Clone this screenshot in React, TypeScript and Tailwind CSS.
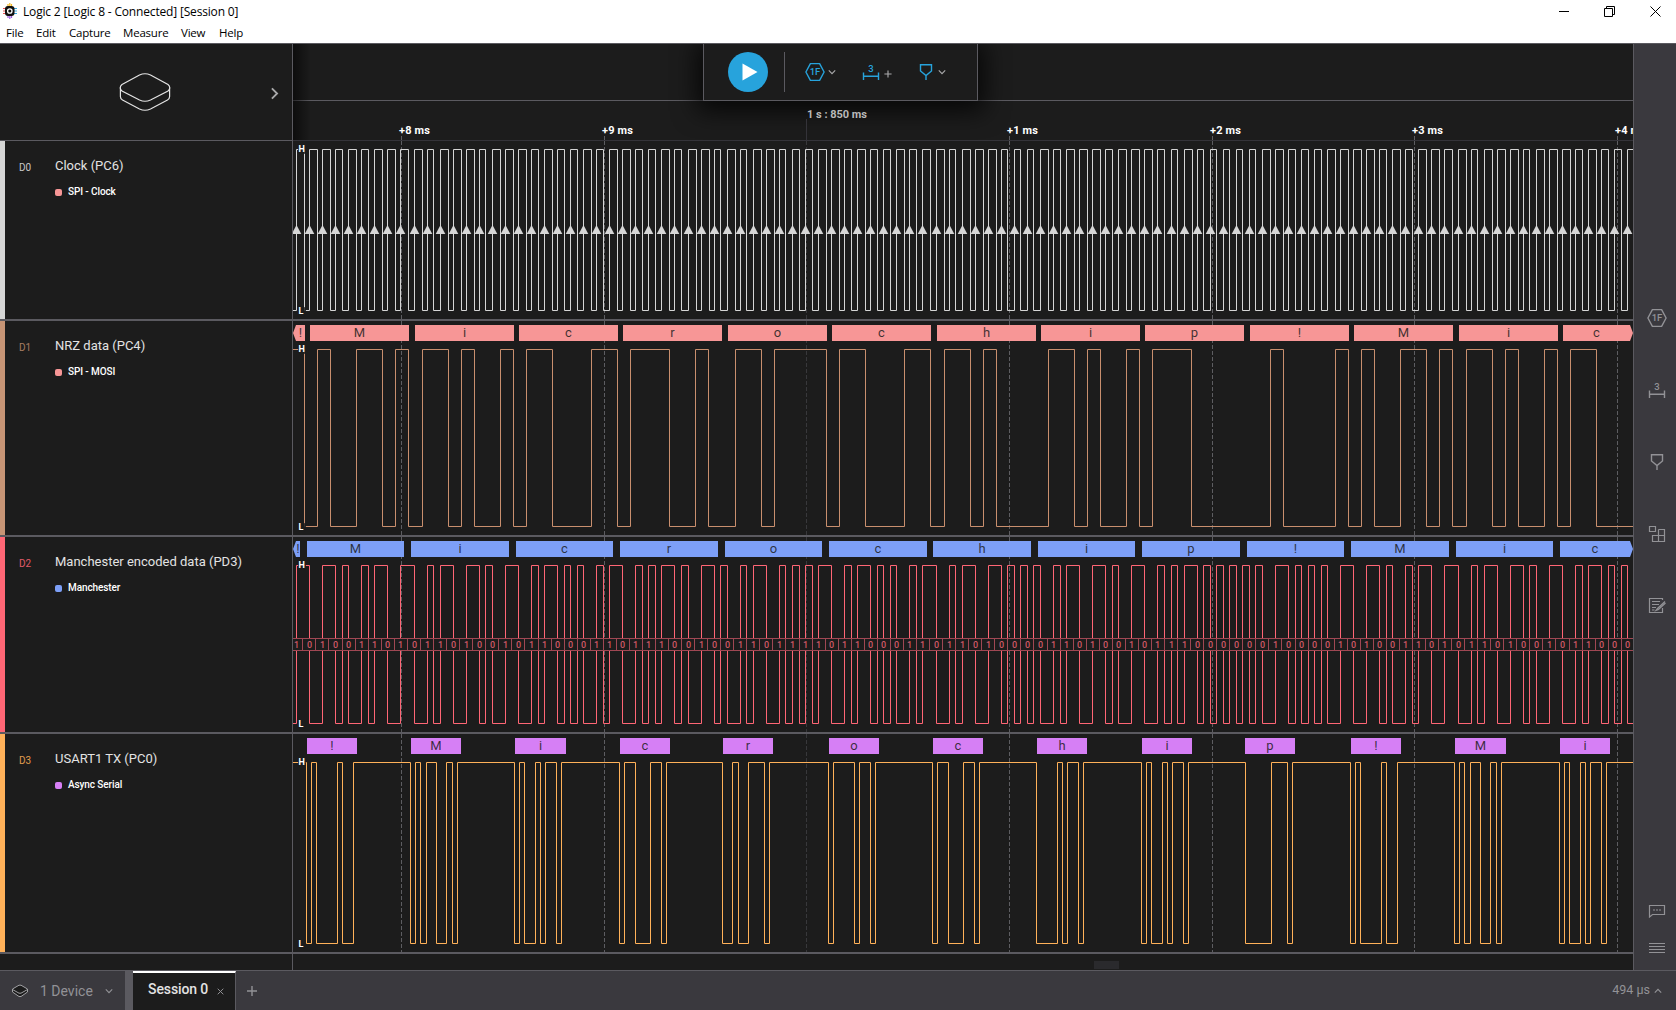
import React from "react";

const LEFT = 293;
const WIDTH = 1340;
const MESSAGE = "Microchip!Mic";

const bitCentres: number[] = (() => {
  const jumps = [414, 688, 936, 1171, 1458];
  const out: number[] = [];
  let x = 296;
  while (x < 1640) {
    out.push(x);
    x += 13;
    if (jumps.includes(x + 1)) x += 1;
  }
  return out;
})();

const bits: number[] = [1];
for (const ch of MESSAGE) {
  const code = ch.charCodeAt(0);
  for (let b = 7; b >= 0; b--) bits.push((code >> b) & 1);
}

const halfBit = (i: number) => {
  const x = bitCentres[i];
  const starts = [270, 414, 688, 936, 1171, 1458, 1710];
  const s = starts.filter((v) => v <= x).length - 1;
  return x + ((x - starts[s]) / (starts[s + 1] - starts[s]) < 0.4 ? 6 : 7);
};

const dataFall = (i: number) => {
  const x = bitCentres[i];
  const early = (x >= 688 && x <= 714) || (x >= 1171 && x <= 1236);
  return x + (early ? 7 : 8);
};

const clockFall = (i: number) => (bits[i] === bits[i + 1] ? halfBit(i) : bitCentres[i] + 8);

function trace(edges: [number, number][], start: number, high: number, low: number) {
  let level = start;
  let d = `M293 ${(level ? high : low) + 0.5}`;
  for (const [x, v] of edges) {
    if (x > 1633) break;
    if (v === level) continue;
    level = v;
    d += `H${x + 0.5}V${(v ? high : low) + 0.5}`;
  }
  return d + "H1634";
}

const clockEdges: [number, number][] = bitCentres.flatMap((x, i) => [
  [x, 1] as [number, number],
  [clockFall(i), 0] as [number, number],
]);

const nrzEdges: [number, number][] = bits.slice(1, bitCentres.length).map((b, i) => [dataFall(i), b]);

const manchesterEdges: [number, number][] = bitCentres.flatMap((x, i) => [
  [x, bits[i]] as [number, number],
  [halfBit(i), 1 - bits[i + 1]] as [number, number],
]);

const frames: [string, number, number][] = [
  ["!", 307, 50], ["M", 411, 50], ["i", 515, 51], ["c", 620, 50], ["r", 723, 50], ["o", 829, 50], ["c", 933, 50],
  ["h", 1037, 50], ["i", 1142, 50], ["p", 1245, 50], ["!", 1351, 50], ["M", 1455, 51], ["i", 1560, 50],
];

const serialEdges: [number, number][] = frames.flatMap(([ch, x]) => {
  const code = ch.charCodeAt(0);
  const start = ch === "p" ? x : x - 1;
  const out: [number, number][] = [[start, 0]];
  for (let b = 0; b < 8; b++) out.push([start + Math.round(5.2 * (b + 1)), (code >> b) & 1]);
  out.push([start + 47, 1]);
  return out;
});

const spiBubbles: [string, number, number][] = [...MESSAGE].map((c, n) => [
  c,
  bitCentres[1 + n * 8] + 1,
  n === 12 ? 1633 : dataFall(8 + n * 8) + 1,
]);

const manStarts = [307, 411, 516, 620, 725, 829, 933, 1038, 1142, 1247, 1351, 1456, 1560];
const manEnds = [404, 509, 613, 718, 822, 927, 1031, 1135, 1240, 1344, 1449, 1553, 1633];
const manBubbles: [string, number, number][] = [...MESSAGE].map((c, n) => [c, manStarts[n], manEnds[n]]);

const gridLines = [401, 604, 806, 1009, 1212, 1414, 1617];

function Grid({ top, height }: { top: number; height: number }) {
  return (
    <g>
      {gridLines.map((x) => (
        <line key={x} x1={x + 0.5} x2={x + 0.5} y1={top} y2={top + height} stroke={x === 806 ? "#38383b" : "#5d5d61"} strokeDasharray="4 2" />
      ))}
    </g>
  );
}

function Level({ y, text }: { y: number; text: string }) {
  return (
    <g>
      <rect x={298} y={y - 4} width={8} height={9} rx={2} fill="#1c1c1c" opacity={0.85} />
      <text x={298.5} y={y + 3.2} fontSize={9} fontWeight={700} fill="#fff">{text}</text>
    </g>
  );
}

function Bubbles({ items, y, color, lead, leadEnd }: { items: [string, number, number][]; y: number; color: string; lead?: boolean; leadEnd?: number }) {
  return (
    <g fontSize={13} textAnchor="middle">
      {lead && (
        <>
          <path d={`M293 ${y + 8}L296 ${y}H${leadEnd}V${y + 16}H296Z`} fill={color} />
          <text x={(293 + leadEnd! + 3) / 2} y={y + 12} fill="#1c1c1c" fillOpacity={0.85}>!</text>
        </>
      )}
      {items.map(([c, a, b], i) => (
        <g key={i}>
          {b === 1633 ? (
            <path d={`M${a} ${y}H1630L1633 ${y + 8}L1630 ${y + 16}H${a}Z`} fill={color} />
          ) : (
            <rect x={a} y={y} width={b - a} height={16} fill={color} />
          )}
          <text x={(a + b) / 2 - (b === 1633 ? 1.5 : 0)} y={y + 12} fill="#1c1c1c" fillOpacity={0.85}>{c}</text>
        </g>
      ))}
    </g>
  );
}

function ChannelRow(props: {
  id: string; title: string; analyzer: string; color: string; idColor: string; tag: string;
  top: number; height: number; rowClass: string; children: React.ReactNode;
}) {
  const { id, title, analyzer, color, idColor, tag, top, height, rowClass, children } = props;
  return (
    <div className={`flex shrink-0 border-b-2 border-[#5b5a60] ${rowClass}`}>
      <div className="flex w-[293px] shrink-0 border-r border-[#5b5a60]">
        <div className="w-[5px] shrink-0" style={{ background: color }} />
        <div className="w-[50px] shrink-0 pt-[19px] pl-[14px] text-[10px] leading-[16px]" style={{ color: idColor }}>{id}</div>
        <div className="pt-[16px]">
          <div className="text-[13px] leading-[18px] text-[#e3e3e3]">{title}</div>
          <div className="mt-[10px] flex items-center gap-[6px]">
            <span className="size-[7px] rounded-[2px]" style={{ background: tag }} />
            <span className="text-[10px] leading-[14px] font-medium tracking-[-0.1px] text-white">{analyzer}</span>
          </div>
        </div>
      </div>
      <svg width={WIDTH} height={height} viewBox={`${LEFT} ${top} ${WIDTH} ${height}`} className="block shrink-0" fill="none">
        <Grid top={top} height={height} />
        {children}
      </svg>
    </div>
  );
}

function HexIcon({ className }: { className: string }) {
  return (
    <svg width="20" height="20" viewBox="0 0 20 20" fill="none" className={className}>
      <path d="M5.4 1.6H14.6L19.1 10L14.6 18.4H5.4L0.9 10Z" stroke="currentColor" strokeWidth="1.4" strokeLinejoin="round" />
      <text x="10" y="13.4" fontSize="9.5" fontWeight="500" textAnchor="middle" fill="currentColor">1F</text>
    </svg>
  );
}

function RangeIcon({ className }: { className: string }) {
  return (
    <svg width="18" height="18" viewBox="0 0 18 18" fill="none" className={className}>
      <path d="M1.5 9.5V17M16.5 9.5V17M1.5 13.3H16.5" stroke="currentColor" strokeWidth="1.4" />
      <text x="9" y="8.5" fontSize="9.5" fontWeight="500" textAnchor="middle" fill="currentColor">3</text>
    </svg>
  );
}

function MarkerIcon({ className }: { className: string }) {
  return (
    <svg width="14" height="18" viewBox="0 0 14 18" fill="none" className={className}>
      <path d="M1.5 1.7H12.5V8L7 12.6L1.5 8ZM7 12.6V17" stroke="currentColor" strokeWidth="1.4" />
    </svg>
  );
}

function Chevron({ d, size, className }: { d: string; size: number; className: string }) {
  return (
    <svg width={size} height={size} viewBox="0 0 10 10" fill="none" className={className}>
      <path d={d} stroke="currentColor" strokeWidth="1.4" />
    </svg>
  );
}

function TitleBar() {
  return (
    <div className="h-[43px] shrink-0 bg-white font-['Open_Sans','Noto_Sans',sans-serif] text-black">
      <div className="flex h-[22px] items-center">
        <svg width="16" height="16" viewBox="0 0 16 16" className="ml-[2px]">
          <g strokeWidth="1.2">
            <path d="M6 1V4M9.5 1V4M7.8 0V3" stroke="#f5b921" />
            <path d="M1 5.5H4M1 8H4M1 10.5H4" stroke="#ee4f4f" />
            <path d="M12 5.5H15M12 8H15M12 10.5H15" stroke="#36a9e0" />
            <path d="M6 12V15M9.5 12V15M7.8 12V16" stroke="#9a5be0" />
          </g>
          <rect x="3" y="3" width="9.5" height="10" rx="3" fill="#111" />
          <circle cx="7.8" cy="8" r="2.2" fill="none" stroke="#fff" strokeWidth="1.3" />
        </svg>
        <span className="mt-px ml-[5px] text-[12px] tracking-[-0.17px] whitespace-nowrap">Logic 2 [Logic 8 - Connected] [Session 0]</span>
        <div className="ml-auto flex items-center">
          <svg width="11" height="11" viewBox="0 0 11 11" className="mr-[34px]"><path d="M0 5.5H10" stroke="#000" /></svg>
          <svg width="11" height="11" viewBox="0 0 11 11" fill="none" className="mr-[35px]">
            <path d="M0.5 2.5H8.5V10.5H0.5ZM2.5 2.5V0.5H10.5V8.5H8.5" stroke="#000" />
          </svg>
          <svg width="11" height="11" viewBox="0 0 11 11" className="mr-[15px]"><path d="M0.5 0.5L10.5 10.5M10.5 0.5L0.5 10.5" stroke="#000" /></svg>
        </div>
      </div>
      <div className="flex h-[21px] items-center pl-[6px] text-[11.5px] tracking-[-0.2px]">
        <span className="w-[30px]">File</span>
        <span className="w-[33px]">Edit</span>
        <span className="w-[54px]">Capture</span>
        <span className="w-[58px]">Measure</span>
        <span className="w-[38px]">View</span>
        <span>Help</span>
      </div>
    </div>
  );
}

function Header() {
  return (
    <div className="flex h-[98px] shrink-0 border-t border-[#5b5a60]">
      <div className="flex w-[293px] shrink-0 items-center border-r border-b border-[#5b5a60]">
        <svg width="52" height="40" viewBox="0 0 52 40" fill="none" className="ml-[119px]" stroke="#e3e3e3" strokeWidth="1.2">
          <path d="M3 12.5L20.5 3Q26 0.5 31.5 3L49 12.5Q52.5 15.5 49 19L31.5 28Q26 30.5 20.5 28L3 19Q-0.5 15.5 3 12.5Z" />
          <path d="M1.4 15.5V24.5Q1.4 27 3.5 28L20.5 37Q26 39.5 31.5 37L48.5 28Q50.6 27 50.6 24.5V15.5" />
        </svg>
        <Chevron d="M3 1L7 5L3 9" size={13} className="mt-[2px] ml-[97px] text-[#a9a9ab]" />
      </div>
      <div className="relative flex w-[1340px] shrink-0 flex-col overflow-hidden border-b border-[#343339]">
        <div className="flex h-[57px] shrink-0 border-b border-[#5b5a60] pl-[410px]">
          <div className="relative flex h-[57px] w-[275px] items-center border border-t-0 border-[#5b5a60] bg-[#1c1c1c] shadow-[0_4px_24px_6px_rgba(0,0,0,0.75)]">
            <div className="ml-[24px] flex size-[40px] shrink-0 items-center justify-center rounded-full bg-[#27a3dc]">
              <svg width="16" height="18" viewBox="0 0 16 18" className="ml-[3px]"><path d="M0.5 0.5L15.5 9L0.5 17.5Z" fill="#fff" /></svg>
            </div>
            <div className="ml-[16px] h-[40px] w-px shrink-0 bg-[#5b5a60]" />
            <HexIcon className="ml-[20px] shrink-0 text-[#27a3dc]" />
            <Chevron d="M1 3L5 7L9 3" size={8} className="ml-[3px] shrink-0 text-[#a9a9ab]" />
            <RangeIcon className="ml-[26px] shrink-0 text-[#27a3dc]" />
            <Chevron d="M5 0.5V9.5M0.5 5H9.5" size={8} className="mt-[3px] ml-[4px] shrink-0 text-[#a9a9ab]" />
            <MarkerIcon className="ml-[27px] shrink-0 text-[#27a3dc]" />
            <Chevron d="M1 3L5 7L9 3" size={8} className="ml-[5px] shrink-0 text-[#a9a9ab]" />
          </div>
        </div>
        <svg width="1340" height="39" viewBox="293 101 1340 39" className="relative block shrink-0" fontSize="11" fontWeight="700">
          <path d="M806.5 119V140" stroke="#343339" />
          {gridLines.filter((x) => x !== 806).map((x) => (
            <path key={x} d={`M${x + 0.5} 136V140`} stroke="#5d5d61" />
          ))}
          <text x="807" y="117.5" fill="#b9b9b9" textLength="60">1 s : 850 ms</text>
          {["+8 ms", "+9 ms", "", "+1 ms", "+2 ms", "+3 ms", "+4 ms"].map((t, i) =>
            t ? <text key={i} x={gridLines[i] - 2} y="134" fill="#fff" textLength="31">{t}</text> : null,
          )}
        </svg>
        <div className="absolute top-0 left-0 h-full w-[18px] bg-linear-to-r from-black/55 to-transparent" />
      </div>
    </div>
  );
}

function Sidebar() {
  return (
    <div className="flex w-[43px] shrink-0 flex-col items-center border-t border-l border-[#5b5a60] bg-[#3a393e] pl-[4px] text-[#929296]">
      <HexIcon className="mt-[264px]" />
      <RangeIcon className="mt-[53px]" />
      <MarkerIcon className="mt-[54px]" />
      <svg width="18" height="18" viewBox="0 0 18 18" fill="none" stroke="currentColor" strokeWidth="1.2" className="mt-[54px]">
        <path d="M1.5 1.5H7.5V6.5H1.5ZM10.5 4.5V16.5M10.5 4.5H16.5V16.5H4.5V10.5H16.5" />
      </svg>
      <svg width="18" height="17" viewBox="0 0 18 17" fill="none" stroke="currentColor" strokeWidth="1.2" className="mt-[54px]">
        <path d="M14.5 3V1.5H1.5V15.5H14.5V11M4 4.5H12M4 7.5H11M4 10.5H8M4 13H6.5M17 4.5L9.5 11.5L8 13.5L10.5 12.5L17.5 6" />
      </svg>
      <svg width="18" height="14" viewBox="0 0 18 14" fill="none" stroke="currentColor" strokeWidth="1.2" className="mt-[290px]">
        <path d="M1.5 1.5H16.5V10.5H4.5L1.5 13Z" />
        <path d="M5 6H13" strokeDasharray="2 1" />
      </svg>
      <svg width="16" height="10" viewBox="0 0 16 10" stroke="currentColor" className="mt-[25px]">
        <path d="M0 0.5H16M0 3.5H16M0 6.5H16M0 9.5H16" />
      </svg>
    </div>
  );
}

function StatusBar() {
  return (
    <div className="flex h-[40px] shrink-0 border-t border-[#5b5a60] bg-[#3a393e] text-[14px] text-[#929296]">
      <div className="flex w-[125px] items-center pt-px">
        <svg width="18" height="14" viewBox="0 0 18 14" className="ml-[11px]" stroke="#a0a0a3">
          <path d="M1.5 5L8 1.2H10L16.5 5V8L10 12.5H8L1.5 8Z" fill="#1c1c1c" />
          <path d="M1.5 5.5L8 9.2H10L16.5 5.5" fill="none" />
        </svg>
        <span className="ml-[11px]">1 Device</span>
        <Chevron d="M1 3L5 7L9 3" size={8} className="ml-[12px]" />
      </div>
      <div className="w-[8px] bg-[#5b5a60]" />
      <div className="flex w-[103px] items-center border-t-2 border-r border-t-white border-r-[#5b5a60] bg-[#1c1c1c] pb-[4px]">
        <span className="ml-[15px] font-medium tracking-[-0.1px] text-[#e3e3e3]">Session 0</span>
        <Chevron d="M1 1L9 9M9 1L1 9" size={7} className="mt-[4px] ml-[9px]" />
      </div>
      <Chevron d="M5 0V10M0 5H10" size={10} className="mt-[15px] ml-[11px]" />
      <div className="mr-[14px] ml-auto flex items-center">
        <span className="text-[12.5px]">494 µs</span>
        <Chevron d="M1 7L5 3L9 7" size={8} className="ml-[4px]" />
      </div>
    </div>
  );
}

export default function App() {
  return (
    <div className="flex h-[1010px] w-[1676px] flex-col overflow-hidden bg-[#1c1c1c] font-[Roboto,sans-serif]">
      <TitleBar />
      <div className="flex min-h-0 flex-1">
        <div className="flex w-[1633px] shrink-0 flex-col">
          <Header />
          <ChannelRow id="D0" title="Clock (PC6)" analyzer="SPI - Clock" color="#d6d6d6" idColor="#c8c8c8" tag="#f79696" top={141} height={178} rowClass="h-[180px]">
            <path d={trace(clockEdges, 0, 149, 310)} stroke="#d6d6d6" />
            {bitCentres.map((x) => (
              <path key={x} d={`M${x + 0.5} 225L${x + 5.3} 234H${x - 4.3}Z`} fill="#d6d6d6" />
            ))}
            <Level y={149} text="H" />
            <Level y={311} text="L" />
          </ChannelRow>
          <ChannelRow id="D1" title="NRZ data (PC4)" analyzer="SPI - MOSI" color="#c69475" idColor="#a87d62" tag="#f79696" top={321} height={214} rowClass="h-[216px]">
            <path d={trace(nrzEdges, 1, 349, 526)} stroke="#c98f6e" />
            <Bubbles items={spiBubbles} y={325} color="#f79696" lead leadEnd={305} />
            <Level y={349} text="H" />
            <Level y={527} text="L" />
          </ChannelRow>
          <ChannelRow id="D2" title="Manchester encoded data (PD3)" analyzer="Manchester" color="#ff6675" idColor="#e05a68" tag="#7d9ff7" top={537} height={195} rowClass="h-[197px]">
            <path d={trace(manchesterEdges, 0, 565, 723)} stroke="#ff6675" />
            <g fontSize={9} fontWeight={500} textAnchor="middle">
              {bitCentres.map((x, i) => {
                const a = i ? halfBit(i - 1) : 290;
                const e = halfBit(i);
                return (
                  <g key={i}>
                    <rect x={a + 0.5} y={638.5} width={e - a} height={12} fill="#1c1c1c" stroke="#a04753" />
                    <text x={x + 0.5} y={648} fill="#cf5866">{bits[i]}</text>
                  </g>
                );
              })}
            </g>
            <Bubbles items={manBubbles} y={541} color="#7d9ff7" lead leadEnd={300} />
            <Level y={565} text="H" />
            <Level y={724} text="L" />
          </ChannelRow>
          <ChannelRow id="D3" title="USART1 TX (PC0)" analyzer="Async Serial" color="#ffb159" idColor="#e09c4f" tag="#d67ff5" top={734} height={218} rowClass="h-[220px]">
            <path d={trace(serialEdges, 1, 762, 943)} stroke="#ffb159" />
            <Bubbles items={frames.map(([c, x, w]) => [c, x, x + w])} y={738} color="#d67ff5" />
            <Level y={762} text="H" />
            <Level y={944} text="L" />
          </ChannelRow>
          <div className="flex flex-1">
            <div className="w-[293px] border-r border-[#5b5a60]" />
            <div className="mt-[7px] ml-[801px] h-[8px] w-[25px] bg-[#2a2a2d]" />
          </div>
        </div>
        <Sidebar />
      </div>
      <StatusBar />
    </div>
  );
}
